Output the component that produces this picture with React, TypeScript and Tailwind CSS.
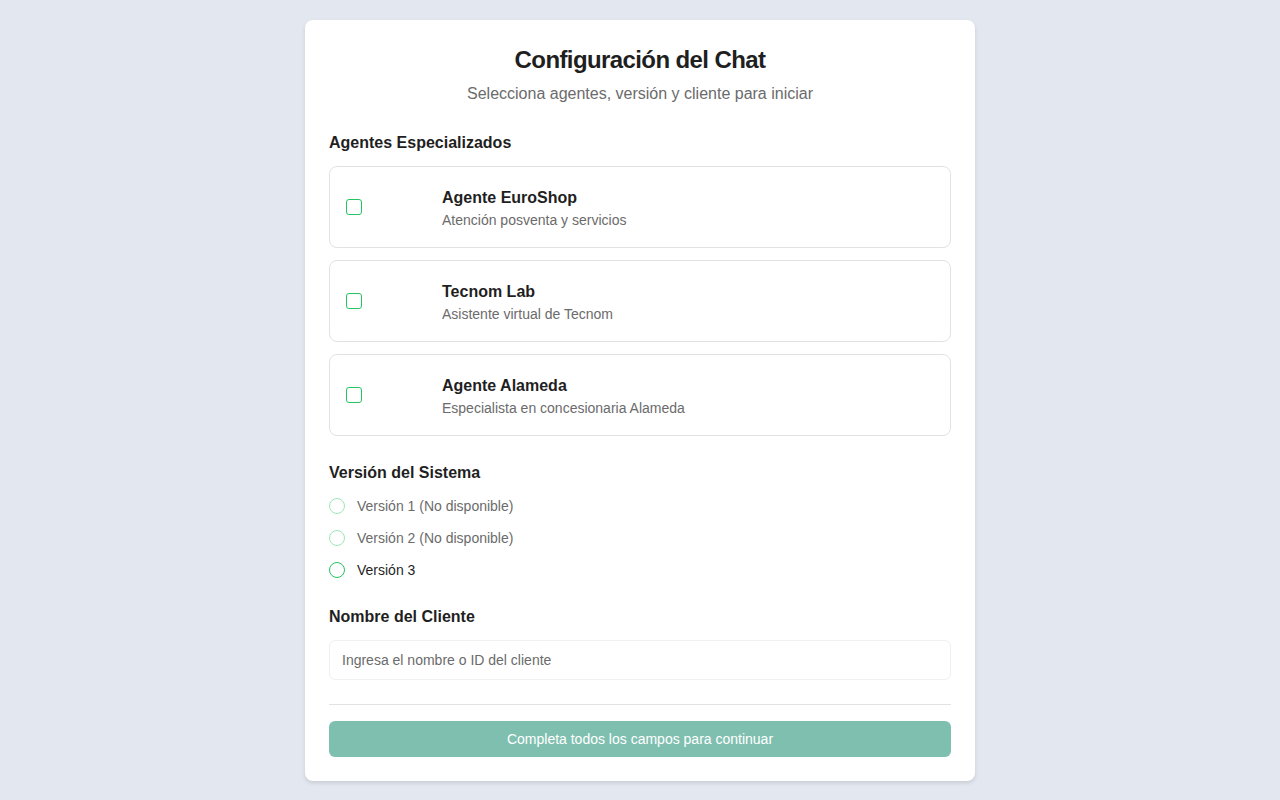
const agents = [
  { name: "Agente EuroShop", desc: "Atención posventa y servicios" },
  { name: "Tecnom Lab", desc: "Asistente virtual de Tecnom" },
  { name: "Agente Alameda", desc: "Especialista en concesionaria Alameda" },
];

const versions = [
  { label: "Versión 1 (No disponible)", disabled: true },
  { label: "Versión 2 (No disponible)", disabled: true },
  { label: "Versión 3", disabled: false },
];

export default function App() {
  return (
    <div className="min-h-screen bg-[#e3e7ef] flex justify-center pt-5 font-['Liberation_Sans',Arial,sans-serif]">
      <div className="w-[670px] h-[761px] bg-white rounded-lg shadow-[0_2px_4px_rgba(0,0,0,0.12)] px-6 pt-[22px]">
        <h1 className="text-center text-2xl font-bold tracking-tight text-[#1f1f1f] leading-[36px]">
          Configuración del Chat
        </h1>
        <p className="text-center text-base text-[#6b6b6b] mt-[4px] leading-6">
          Selecciona agentes, versión y cliente para iniciar
        </p>

        <h2 className="text-base font-bold text-[#1f1f1f] mt-[25px] leading-6">Agentes Especializados</h2>
        <div className="mt-[11px] flex flex-col gap-3">
          {agents.map((a) => (
            <div key={a.name} className="h-[82px] border border-[#e2e2e2] rounded-lg flex items-center px-4 gap-4">
              <span className="w-4 h-4 rounded-[3px] border border-[#22c55e] shrink-0" />
              <span className="w-12 h-12 shrink-0" />
              <div className="pt-[2px]">
                <div className="text-base font-bold text-[#1f1f1f] leading-6">{a.name}</div>
                <div className="text-sm text-[#6b6b6b] leading-5">{a.desc}</div>
              </div>
            </div>
          ))}
        </div>

        <h2 className="text-base font-bold text-[#1f1f1f] mt-[25px] leading-6">Versión del Sistema</h2>
        <div className="mt-[11px] flex flex-col gap-3">
          {versions.map((v) => (
            <div key={v.label} className="flex items-center gap-3 h-5">
              <span
                className={`w-4 h-4 rounded-full border ${v.disabled ? "border-[#9ee6b6]" : "border-[#22c55e]"}`}
              />
              <span className={`text-sm ${v.disabled ? "text-[#6b6b6b]" : "text-[#1f1f1f]"}`}>{v.label}</span>
            </div>
          ))}
        </div>

        <h2 className="text-base font-bold text-[#1f1f1f] mt-[25px] leading-6">Nombre del Cliente</h2>
        <div className="mt-[11px] h-10 border border-[#f0f0f0] rounded-md flex items-center px-3">
          <span className="text-sm text-[#6b6b6b]">Ingresa el nombre o ID del cliente</span>
        </div>

        <div className="mt-6 border-t border-[#e2e2e2] pt-4">
          <div className="h-9 rounded-md bg-[#7fbfb0] flex items-center justify-center text-sm text-white">
            Completa todos los campos para continuar
          </div>
        </div>
      </div>
    </div>
  );
}
